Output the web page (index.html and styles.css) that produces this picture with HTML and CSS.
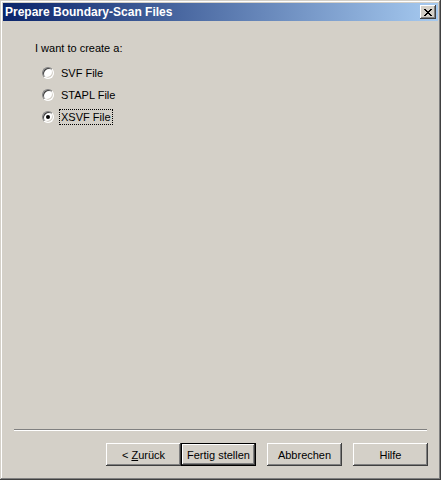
FILE: index.html
```html
<html>
<head>
    <title>Prepare Boundary-Scan Files</title>
    <link rel="stylesheet" href="styles.css">
</head>
<body>
    <div class="window">
        <div class="titlebar">
            <span class="title">Prepare Boundary-Scan Files</span>
            <div class="close-btn">
                <!-- pixel X glyph -->
                <svg width="8" height="7" viewBox="0 0 8 7" shape-rendering="crispEdges">
                    <path d="M0 0h2v1h-2z M6 0h2v1h-2z M1 1h2v1h-2z M5 1h2v1h-2z M2 2h4v1h-4z M3 3h2v1h-2z M2 4h4v1h-4z M1 5h2v1h-2z M5 5h2v1h-2z M0 6h2v1h-2z M6 6h2v1h-2z" fill="#000"/>
                </svg>
            </div>
        </div>

        <div class="dialog">
            <div class="content">
                <div class="prompt">I want to create a:</div>
                <div class="options">
                    <div class="option">
                        <span class="radio"></span>
                        <span class="label">SVF File</span>
                    </div>
                    <div class="option">
                        <span class="radio"></span>
                        <span class="label">STAPL File</span>
                    </div>
                    <div class="option">
                        <span class="radio checked"></span>
                        <span class="label focused">XSVF File</span>
                    </div>
                </div>
            </div>

            <div class="separator"></div>

            <div class="buttons">
                <div class="btn-pair">
                    <button class="btn">&lt; <u>Z</u>urück</button>
                    <button class="btn default">Fertig stellen</button>
                </div>
                <button class="btn">Abbrechen</button>
                <button class="btn">Hilfe</button>
            </div>
        </div>
    </div>
</body>
</html>
```

FILE: styles.css
```css
body {
    margin: 0;
    background: #d4d0c8;
    font-family: 'Liberation Sans', Arial, sans-serif;
    font-size: 11px;
    color: #000;
}

.window {
    width: 441px;
    height: 480px;
    box-sizing: border-box;
    padding: 3px;
    background: #d4d0c8;
    display: flex;
    flex-direction: column;
    /* classic 3D frame */
    box-shadow: inset -1px -1px #404040, inset 1px 1px #d4d0c8,
                inset -2px -2px #808080, inset 2px 2px #ffffff;
}

.titlebar {
    height: 18px;
    display: flex;
    align-items: center;
    justify-content: space-between;
    padding: 0 2px 0 2px;
    background: linear-gradient(to right, #0a246a, #a6caf0);
}

.title {
    color: #fff;
    font-weight: bold;
    font-size: 12px;
    padding-left: 0;
}

.close-btn {
    width: 16px;
    height: 14px;
    box-sizing: border-box;
    display: flex;
    align-items: center;
    justify-content: center;
    background: #d4d0c8;
    box-shadow: inset -1px -1px #404040, inset 1px 1px #ffffff,
                inset -2px -2px #808080;
}

.dialog {
    flex: 1;
    display: flex;
    flex-direction: column;
    padding: 1px 0 0 0;
}

.content {
    flex: 1;
    padding: 20px 0 0 32px;
}

.prompt {
    line-height: 13px;
    margin-bottom: 11px;
}

.options {
    display: flex;
    flex-direction: column;
    gap: 9px;
    padding-left: 7px;
}

.option {
    display: flex;
    align-items: center;
    gap: 5px;
    height: 13px;
}

.radio {
    width: 12px;
    height: 12px;
    box-sizing: border-box;
    border-radius: 50%;
    background: #fff;
    border: 1px solid;
    border-color: #808080 #ffffff #ffffff #808080;
    box-shadow: inset 1px 1px #404040, inset -1px -1px #d4d0c8;
    display: flex;
    align-items: center;
    justify-content: center;
}

.radio.checked::after {
    content: "";
    width: 4px;
    height: 4px;
    border-radius: 50%;
    background: #000;
}

.label {
    padding: 1px 1px;
    border: 1px solid transparent;
}

.label.focused {
    border: 1px dotted #000;
}

.separator {
    margin: 0 11px 0 11px;
    border-top: 1px solid #808080;
    border-bottom: 1px solid #ffffff;
    height: 0;
}

.buttons {
    display: flex;
    gap: 11px;
    padding: 12px 9px 11px 103px;
}

.btn-pair {
    display: flex;
}

.btn {
    width: 75px;
    height: 23px;
    box-sizing: border-box;
    border: none;
    padding: 0;
    font-family: 'Liberation Sans', Arial, sans-serif;
    font-size: 11px;
    color: #000;
    background: #d4d0c8;
    box-shadow: inset -1px -1px #404040, inset 1px 1px #ffffff,
                inset -2px -2px #808080, inset 2px 2px #d4d0c8;
}

.btn.default {
    border: 1px solid #000;
}
```
